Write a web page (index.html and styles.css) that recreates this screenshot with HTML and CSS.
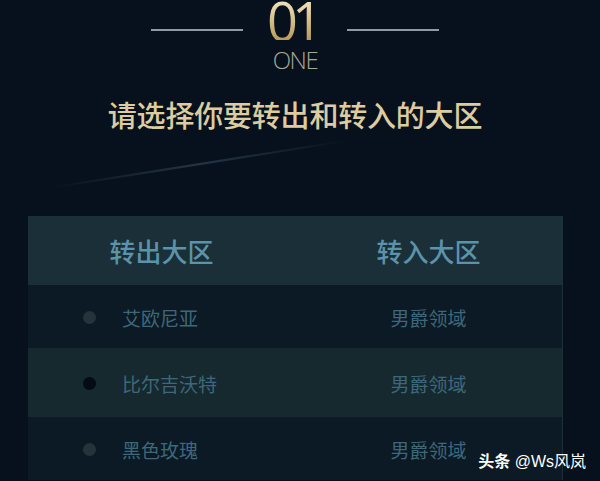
FILE: index.html
```html
<!DOCTYPE html>
<html lang="zh-CN">
<head>
    <meta charset="UTF-8">
    <meta name="viewport" content="width=device-width, initial-scale=1.0">
    <title>转区服务</title>
    <link rel="stylesheet" href="styles.css">
</head>
<body>
    <div class="streak"></div>

    <div class="step">
        <span class="step-line"></span>
        <div class="step-num">
            <div class="num">01</div>
            <div class="word">ONE</div>
        </div>
        <span class="step-line"></span>
    </div>

    <h2 class="title">请选择你要转出和转入的大区</h2>

    <div class="zones">
        <div class="zones-head">
            <div class="col">转出大区</div>
            <div class="col">转入大区</div>
        </div>
        <div class="zone-row">
            <div class="col from"><span class="dot"></span>艾欧尼亚</div>
            <div class="col">男爵领域</div>
        </div>
        <div class="zone-row active">
            <div class="col from"><span class="dot"></span>比尔吉沃特</div>
            <div class="col">男爵领域</div>
        </div>
        <div class="zone-row">
            <div class="col from"><span class="dot"></span>黑色玫瑰</div>
            <div class="col">男爵领域</div>
        </div>
    </div>

    <div class="mark"><b>头条</b> @Ws风岚</div>
</body>
</html>
```

FILE: styles.css
```css
body { margin: 0; height: 481px; overflow: hidden; position: relative; background: #07111d; font-family: "Noto Sans CJK SC", "Noto Sans", sans-serif; }

.streak { position: absolute; left: 50px; top: 163px; width: 300px; height: 2px; background: linear-gradient(90deg, rgba(80,110,130,0), rgba(90,120,140,0.35), rgba(80,110,130,0)); transform: rotate(-9deg); }

.step { display: flex; justify-content: center; align-items: flex-start; gap: 24px; padding-right: 10px; }
.step-line { width: 92px; height: 2px; margin-top: 29px; background: #8d9ca4; }
.step-num { display: flex; flex-direction: column; align-items: center; }
.num { font-family: "Open Sans", sans-serif; font-weight: 400; font-size: 54px; line-height: 40px; letter-spacing: -6px; padding-right: 6px; color: #d9c792; background: linear-gradient(180deg, #f1e4ba, #b99a5b); -webkit-background-clip: text; background-clip: text; -webkit-text-fill-color: transparent; }
.word { font-family: "Open Sans", sans-serif; font-weight: 300; font-size: 24px; line-height: 26px; letter-spacing: -1.5px; color: #a9a796; margin-top: 7px; }

.title { margin: 24px 0 0; padding-right: 10px; text-align: center; font-size: 29px; line-height: 34px; font-weight: 500; letter-spacing: -0.2px; color: #dccca0; }

.zones { margin: 85px 37px 0 28px; border-right: 1px solid #1c3038; }
.zones-head { display: grid; grid-template-columns: 1fr 1fr; height: 69px; align-items: center; background: #1a2f37; color: #5b93aa; font-size: 26px; font-weight: 500; }
.col { text-align: center; }
.zone-row { display: grid; grid-template-columns: 1fr 1fr; height: 63px; align-items: center; background: #0b1a25; color: #3d687a; font-size: 19px; padding-top: 2px; box-sizing: border-box; }
.zone-row.active { height: 69px; background: #15292f; }
.from { display: flex; align-items: center; gap: 26px; padding-left: 55px; }
.dot { width: 13px; height: 13px; border-radius: 50%; background: #25343b; }
.active .dot { background: #040b12; }

.mark { position: absolute; right: 14px; top: 448px; color: #fff; font-family: "Liberation Sans", "Noto Sans CJK SC", sans-serif; font-size: 16px; }
.mark b { font-family: "Noto Sans CJK SC", sans-serif; }
```
